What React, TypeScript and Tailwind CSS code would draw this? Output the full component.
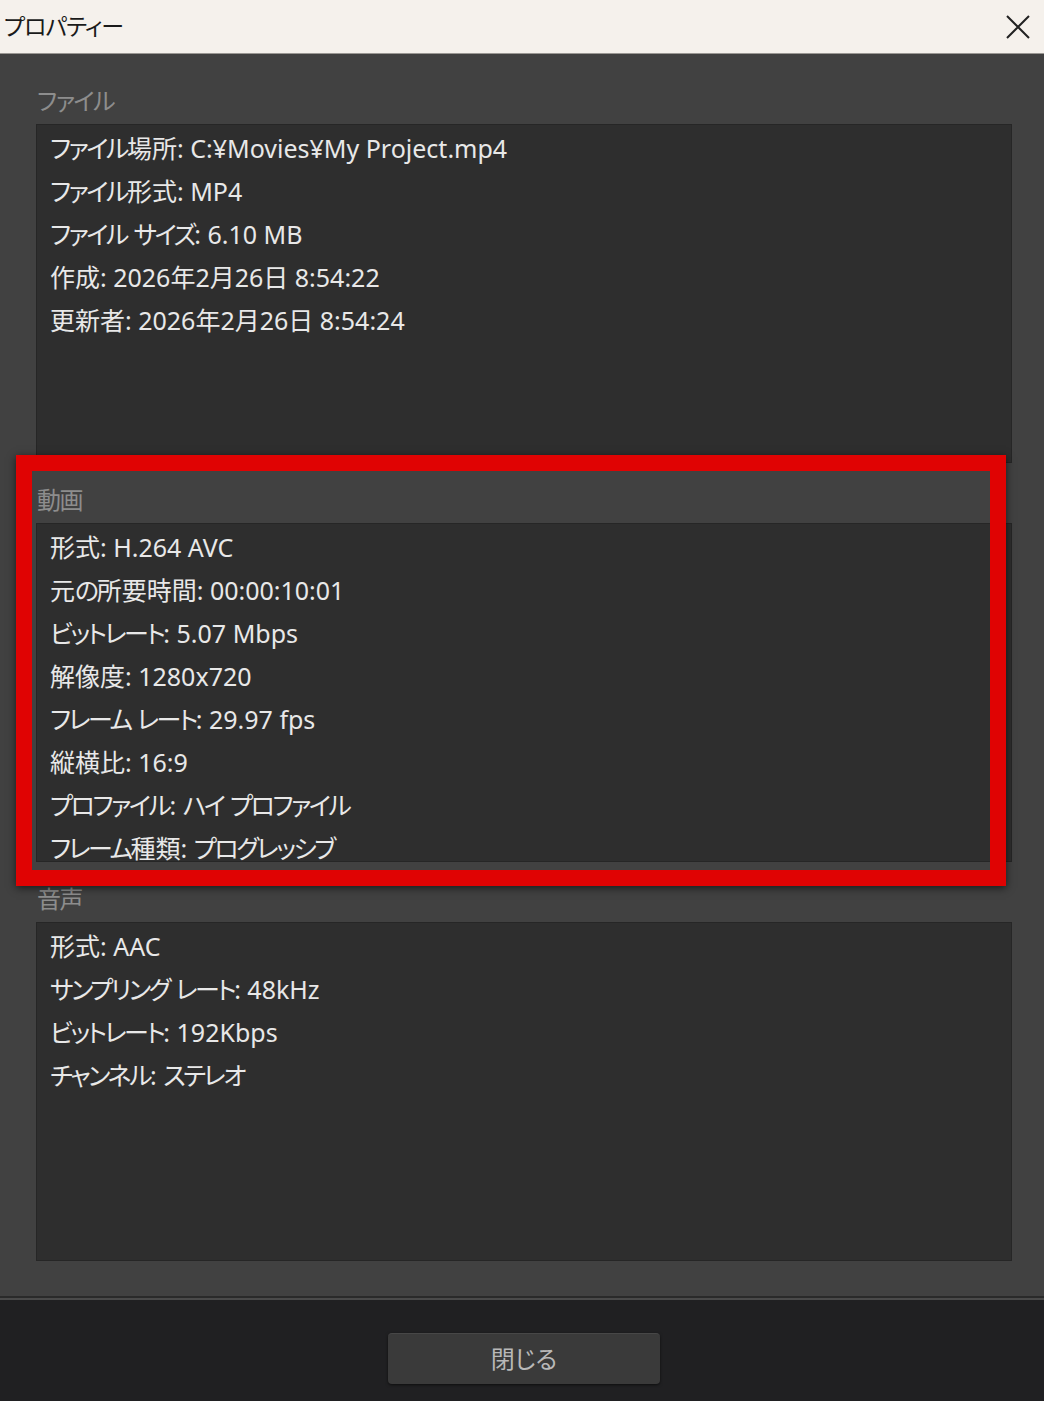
import { FC } from 'react';

const fileLines = [
  'ファイル場所: C:¥Movies¥My Project.mp4',
  'ファイル形式: MP4',
  'ファイル サイズ: 6.10 MB',
  '作成: 2026年2月26日 8:54:22',
  '更新者: 2026年2月26日 8:54:24',
];

const videoLines = [
  '形式: H.264 AVC',
  '元の所要時間: 00:00:10:01',
  'ビットレート: 5.07 Mbps',
  '解像度: 1280x720',
  'フレーム レート: 29.97 fps',
  '縦横比: 16:9',
  'プロファイル: ハイ プロファイル',
  'フレーム種類: プログレッシブ',
];

const audioLines = [
  '形式: AAC',
  'サンプリング レート: 48kHz',
  'ビットレート: 192Kbps',
  'チャンネル: ステレオ',
];

// kana runs are set tighter, like the narrow kana of the Windows UI font
const Line: FC<{ text: string }> = ({ text }) => (
  <div className="text-[25px] leading-[43px] text-[#e8e8e8] whitespace-nowrap">
    {text.split(/([\u3040-\u30FF]+)/).map((part, i) =>
      /[\u3040-\u30FF]/.test(part) ? (
        <span key={i} className="tracking-[-2.4px]">
          {part}
        </span>
      ) : (
        <span key={i}>{part}</span>
      )
    )}
  </div>
);

const Section: FC<{ title: string; lines: string[]; first?: boolean }> = ({ title, lines, first }) => (
  <div className={first ? 'pt-[24px]' : 'pt-[14px]'}>
    <div className="h-[46px] pl-[1px] text-[24px] leading-[46px] tracking-[-1.5px] text-[#8d8d8d]">{title}</div>
    <div className="h-[339px] overflow-hidden border border-[#262626] bg-[#2e2e2e] pl-[13px] pt-[2px]">
      {lines.map((line) => (
        <Line key={line} text={line} />
      ))}
    </div>
  </div>
);

const App: FC = () => {
  return (
    <div className="relative flex h-[1401px] w-[1044px] flex-col overflow-hidden bg-[#202022] font-['Noto_Sans','Noto_Sans_CJK_JP',sans-serif] [font-feature-settings:'palt']">
      {/* Title bar */}
      <div className="flex h-[54px] items-center justify-between border-b border-[#9a9793] bg-[#f5f1ec] pl-[4px] pr-[12px]">
        <span className="text-[23px] tracking-[-1px] text-[#1a1a1a]">プロパティー</span>
        <svg width="28" height="28" viewBox="0 0 28 28" className="text-[#222]">
          <path d="M3 3 L25 25 M25 3 L3 25" stroke="currentColor" strokeWidth="2" fill="none" />
        </svg>
      </div>

      {/* Main area */}
      <div className="bg-[#414141] pl-[36px] pr-[32px] pb-[35px]">
        <Section title="ファイル" lines={fileLines} first />
        <Section title="動画" lines={videoLines} />
        <Section title="音声" lines={audioLines} />
      </div>
      <div className="h-[2px] bg-[#2a2a2a]" />
      <div className="h-[2px] bg-[#4a4a4a]" />

      {/* Footer */}
      <div className="flex flex-1 items-start justify-center pt-[33px]">
        <button className="ml-[4px] h-[51px] w-[272px] rounded-[4px] border-t border-[#474747] bg-[#3a3a3a] text-[24px] text-[#b8b8b8] shadow-[0_1px_3px_rgba(0,0,0,0.6)]">
          閉じる
        </button>
      </div>

      {/* Annotation frame */}
      <div className="pointer-events-none absolute left-[16px] top-[455px] h-[431px] w-[990px] border-[16px] border-[#e00303] shadow-[0_2px_8px_rgba(0,0,0,0.6)]" />
    </div>
  );
};

export default App;
